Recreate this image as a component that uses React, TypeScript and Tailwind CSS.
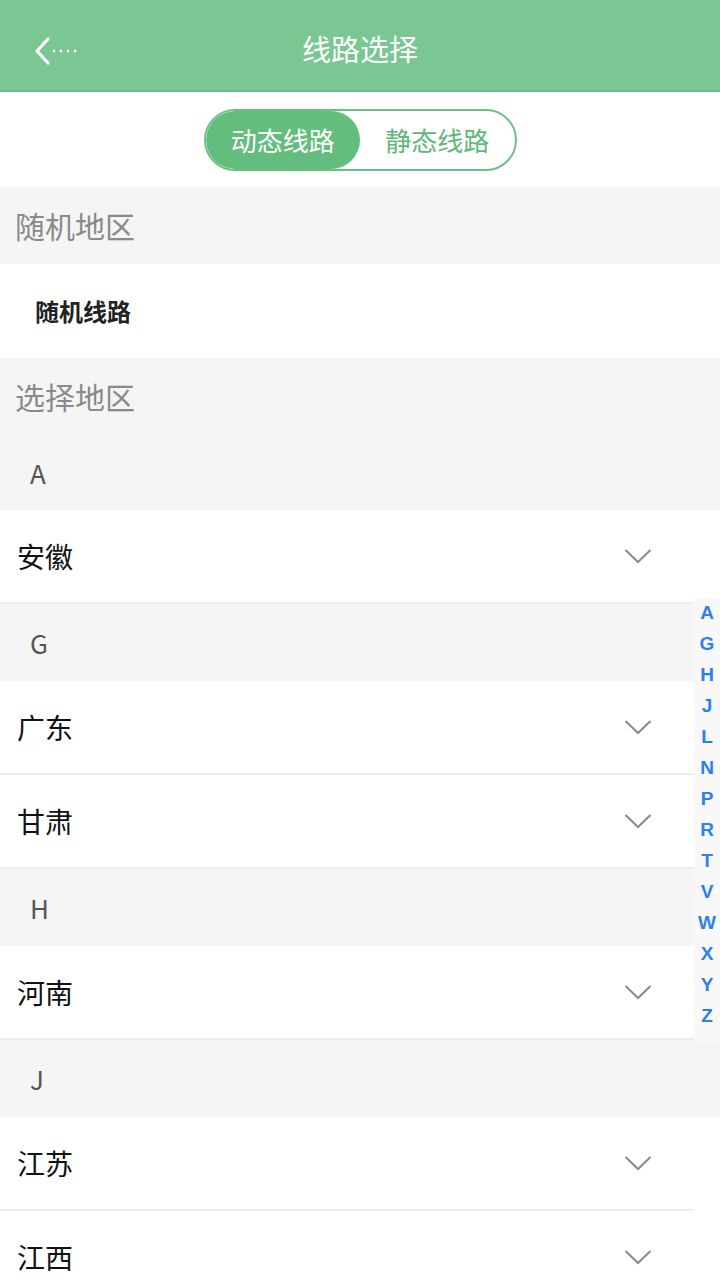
import React from 'react';

const font = { fontFamily: '"Noto Sans CJK SC", "Noto Sans", sans-serif' };

type Entry = { kind: 'letter'; text: string } | { kind: 'item'; text: string };

const entries: Entry[] = [
  { kind: 'item', text: '安徽' },
  { kind: 'letter', text: 'G' },
  { kind: 'item', text: '广东' },
  { kind: 'item', text: '甘肃' },
  { kind: 'letter', text: 'H' },
  { kind: 'item', text: '河南' },
  { kind: 'letter', text: 'J' },
  { kind: 'item', text: '江苏' },
  { kind: 'item', text: '江西' },
];

const index = ['A', 'G', 'H', 'J', 'L', 'N', 'P', 'R', 'T', 'V', 'W', 'X', 'Y', 'Z'];

function Chevron() {
  return (
    <svg width="28" height="16" viewBox="0 0 28 16" fill="none">
      <polyline points="1.5,2 14,14 26.5,2" stroke="#8a8a8a" strokeWidth="2" />
    </svg>
  );
}

function BackIcon() {
  return (
    <svg width="44" height="28" viewBox="0 0 44 28" fill="none">
      <polyline points="14,2 3,14 14,26" stroke="#fff" strokeWidth="3.2" strokeLinecap="round" strokeLinejoin="round" />
      <circle cx="20" cy="14" r="1.4" fill="#fff" />
      <circle cx="27" cy="14" r="1.4" fill="#fff" />
      <circle cx="34" cy="14" r="1.4" fill="#fff" />
      <circle cx="41" cy="14" r="1.4" fill="#fff" />
    </svg>
  );
}

export default function App() {
  return (
    <div className="relative w-[720px] h-[1280px] overflow-hidden bg-white" style={font}>
      <header className="relative h-[92px] bg-[#7ac793] border-b-2 border-[#6dbb86] flex items-center justify-center">
        <button className="absolute left-[34px] top-[37px]">
          <BackIcon />
        </button>
        <h1 className="mt-[8px] text-[29px] text-white font-normal">线路选择</h1>
      </header>

      <div className="h-[95px] flex items-center justify-center">
        <div className="flex w-[313px] h-[62px] rounded-full border-2 border-[#6cc086] overflow-hidden">
          <div className="flex-1 bg-[#63bd7d] rounded-full flex items-center justify-center text-[26px] text-white">动态线路</div>
          <div className="flex-1 flex items-center justify-center text-[26px] text-[#5db878]">静态线路</div>
        </div>
      </div>

      <div className="h-[77px] bg-[#f5f5f5] flex items-center pl-[15px] text-[30px] text-[#8a8a8a]">随机地区</div>
      <div className="h-[94px] flex items-center pl-[35px] text-[24px] font-semibold text-[#222]">随机线路</div>
      <div className="bg-[#f5f5f5]">
        <div className="h-[76px] flex items-center pl-[15px] text-[30px] text-[#8a8a8a]">选择地区</div>
        <div className="h-[76px] flex items-center pl-[30px] text-[26px] text-[#555]">A</div>
      </div>

      {entries.map((e, i) =>
        e.kind === 'letter' ? (
          <div key={i} className="h-[77px] bg-[#f5f5f5] flex items-center pl-[30px] text-[26px] text-[#555]">
            {e.text}
          </div>
        ) : (
          <div key={i} className="bg-white">
            <div className="h-[92px] flex items-center justify-between pl-[17px] pr-[68px]">
              <span className="text-[28px] font-normal text-[#111]">{e.text}</span>
              <Chevron />
            </div>
            <div className="h-[2px] w-[694px] bg-[#ededf0]" />
          </div>
        )
      )}

      <div className="absolute right-0 top-[598px] w-[26px] h-[444px] bg-[#f8f8f8] flex flex-col items-center">
        {index.map((l) => (
          <div key={l} className="h-[31px] flex items-center text-[19px] font-bold text-[#2d7ff0]" style={{ fontFamily: '"Liberation Sans", sans-serif' }}>
            {l}
          </div>
        ))}
      </div>
    </div>
  );
}
